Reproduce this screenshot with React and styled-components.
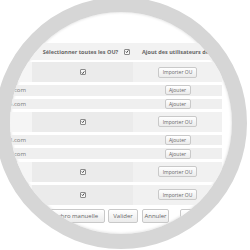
import React from "react";
import styled, { createGlobalStyle } from "styled-components";

const Global = createGlobalStyle`
  html, body { margin: 0; padding: 0; background: #fff; }
  body { width: 250px; height: 250px; overflow: hidden; font-family: "Open Sans", "Liberation Sans", sans-serif; }
`;

const Stage = styled.div`
  width: 250px;
  height: 250px;
  overflow: hidden;
  background: #fff;
`;

const Lens = styled.div`
  box-sizing: border-box;
  width: 252px;
  height: 252px;
  margin: -3px 0 0 -5px;
  border-radius: 50%;
  border: 15px solid #d6d6d6;
  overflow: hidden;
  background: #fff;
  box-shadow: inset 0 0 3px rgba(0, 0, 0, 0.16);
`;

const Screen = styled.div`
  width: 250px;
  margin: -12px 0 0 -10px;
  padding-top: 43px;
`;

const Table = styled.div`
  width: 222px;
  display: flex;
  flex-direction: column;
  gap: 2px;
`;

const Grid = styled.div`
  display: grid;
  grid-template-columns: 32px 101px 89px;
  height: ${(p) => p.$h}px;
`;

const HeadCell = styled.div`
  background: #f2f2f2;
  display: flex;
  align-items: center;
  justify-content: ${(p) => (p.$left ? "flex-start" : "center")};
  padding-left: ${(p) => p.$pl || 0}px;
  gap: 6px;
  font-size: 5.5px;
  font-weight: 700;
  color: #666;
  white-space: nowrap;
  overflow: hidden;
`;

const Body = styled.div`
  height: 143px;
  overflow: hidden;
  display: flex;
  flex-direction: column;
  gap: 3px;
`;

const Cell = styled.div`
  background: ${(p) => p.$bg || "#efefef"};
  display: flex;
  align-items: center;
  justify-content: ${(p) => p.$justify || "center"};
  padding-right: ${(p) => p.$pr || 0}px;
  font-size: 6px;
  color: #777;
  white-space: nowrap;
  overflow: hidden;
`;

const Check = styled.span`
  box-sizing: border-box;
  width: 6px;
  height: 6px;
  border: 1px solid #8a8a8a;
  border-radius: 1px;
  background: #f8f8f8;
  display: inline-flex;
  align-items: center;
  justify-content: center;
  flex: none;
`;

const Btn = styled.div`
  box-sizing: border-box;
  width: ${(p) => p.$w}px;
  height: ${(p) => p.$h}px;
  border: 1px solid #c9c9c9;
  border-radius: 2px;
  background: linear-gradient(#ffffff, #ebebeb);
  display: flex;
  align-items: center;
  justify-content: center;
  font-size: ${(p) => p.$fs}px;
  color: #666;
  white-space: nowrap;
  overflow: hidden;
  flex: none;
  margin-left: ${(p) => p.$ml || 0}px;
`;

const Footer = styled.div`
  display: flex;
  justify-content: flex-start;
  padding: 4px 0 0 41px;
  gap: 3px;
`;

const Tick = () => (
  <Check>
    <svg width="5" height="5" viewBox="0 0 10 10">
      <path d="M2 5.2 L4.2 7.6 L8.4 2.2" fill="none" stroke="#222" strokeWidth="2" />
    </svg>
  </Check>
);

const rows = [
  { ou: true },
  { email: "marie.lefevre@gmail.com" },
  { email: "jean.dupont@domaine.com" },
  { ou: true },
  { email: "paul.martin@hotmail.com" },
  { email: "claire.bernard@free.com" },
  { ou: true },
  { ou: true },
];

export default function App() {
  return (
    <Stage>
      <Global />
      <Lens>
        <Screen>
          <Table>
            <Grid $h={17}>
              <HeadCell />
              <HeadCell $pl={8}>
                Sélectionner toutes les OU? <Tick />
              </HeadCell>
              <HeadCell $left $pl={9}>Ajout des utilisateurs de l'OU</HeadCell>
            </Grid>
            <Body>
              {rows.map((r, i) =>
                r.ou ? (
                  <Grid key={i} $h={21}>
                    <Cell $bg="#f5f5f5" />
                    <Cell $bg="#ebebeb">
                      <Tick />
                    </Cell>
                    <Cell $bg="#f1f1f1">
                      <Btn $w={39} $h={11} $fs={5}>Importer OU</Btn>
                    </Cell>
                  </Grid>
                ) : (
                  <Grid key={i} $h={11}>
                    <Cell $justify="flex-end" $pr={6}>{r.email}</Cell>
                    <Cell />
                    <Cell>
                      <Btn $w={26} $h={10} $fs={5}>Ajouter</Btn>
                    </Cell>
                  </Grid>
                )
              )}
            </Body>
          </Table>
          <Footer>
            <Btn $w={64} $h={14} $fs={6}>Synchro manuelle</Btn>
            <Btn $w={30} $h={14} $fs={6}>Valider</Btn>
            <Btn $w={27} $h={14} $fs={6} $ml={1}>Annuler</Btn>
            <Btn $w={40} $h={14} $fs={6} $ml={8}>Désactiver</Btn>
          </Footer>
        </Screen>
      </Lens>
    </Stage>
  );
}
